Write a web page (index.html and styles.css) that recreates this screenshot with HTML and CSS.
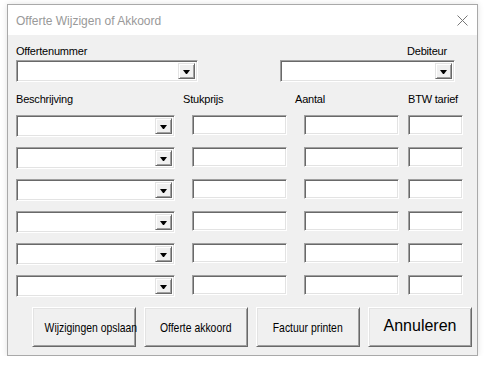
FILE: index.html
```html
<!DOCTYPE html>
<html lang="nl">
<head>
<meta charset="UTF-8" />
<title>Offerte Wijzigen of Akkoord</title>
<link rel="stylesheet" href="styles.css">
</head>
<body>

<div class="window">
  <div class="titlebar">
    <span class="title">Offerte Wijzigen of Akkoord</span>
    <svg class="close" width="11" height="11" viewBox="0 0 11 11">
      <path d="M0.5 0.5 L10.5 10.5 M10.5 0.5 L0.5 10.5" stroke="#777" stroke-width="1" fill="none"/>
    </svg>
  </div>

  <div class="form">
    <div class="topRow">
      <div class="field offerte">
        <label class="lbl">Offertenummer</label>
        <div class="combo"><span class="drop"><i></i></span></div>
      </div>
      <div class="field debiteur">
        <label class="lbl">Debiteur</label>
        <div class="combo"><span class="drop"><i></i></span></div>
      </div>
    </div>

    <div class="headRow">
      <span class="lbl">Beschrijving</span>
      <span class="lbl">Stukprijs</span>
      <span class="lbl">Aantal</span>
      <span class="lbl">BTW tarief</span>
    </div>

    <div class="lines">
      <div class="combo line"><span class="drop"><i></i></span></div>
      <div class="textbox prijs"></div>
      <div class="textbox aantal"></div>
      <div class="textbox btw"></div>

      <div class="combo line"><span class="drop"><i></i></span></div>
      <div class="textbox prijs"></div>
      <div class="textbox aantal"></div>
      <div class="textbox btw"></div>

      <div class="combo line"><span class="drop"><i></i></span></div>
      <div class="textbox prijs"></div>
      <div class="textbox aantal"></div>
      <div class="textbox btw"></div>

      <div class="combo line"><span class="drop"><i></i></span></div>
      <div class="textbox prijs"></div>
      <div class="textbox aantal"></div>
      <div class="textbox btw"></div>

      <div class="combo line"><span class="drop"><i></i></span></div>
      <div class="textbox prijs"></div>
      <div class="textbox aantal"></div>
      <div class="textbox btw"></div>

      <div class="combo line"><span class="drop"><i></i></span></div>
      <div class="textbox prijs"></div>
      <div class="textbox aantal"></div>
      <div class="textbox btw"></div>
    </div>

    <div class="buttons">
      <button class="btn small"><span>Wijzigingen opslaan</span></button>
      <button class="btn small"><span>Offerte akkoord</span></button>
      <button class="btn small"><span>Factuur printen</span></button>
      <button class="btn big">Annuleren</button>
    </div>
  </div>
</div>

</body>
</html>
```

FILE: styles.css
```css
body {
  margin: 0;
  background: #fff;
  font-family: "Liberation Sans", Arial, sans-serif;
  color: #000;
}

.window {
  box-sizing: border-box;
  width: 471px;
  height: 352px;
  margin: 4px 0 0 7px;
  border: 1px solid #a9a9a9;
  background: #f0f0f0;
  box-shadow: 0 0 6px rgba(0,0,0,0.12);
  display: flex;
  flex-direction: column;
}

.titlebar {
  height: 30px;
  background: #fff;
  display: flex;
  align-items: center;
  justify-content: space-between;
  padding: 0 9px 0 8px;
}
.title {
  font-size: 12px;
  color: #999;
  margin-top: 1px;
}
.close { margin-top: 1px; }

.form {
  padding: 10px 0 0 8px;
}

.lbl {
  display: block;
  font-size: 11px;
  line-height: 13px;
  letter-spacing: -0.2px;
  height: 13px;
}

.topRow {
  display: flex;
  gap: 82px;
}
.field .lbl { margin-bottom: 2px; }
.offerte .combo { width: 182px; }
.debiteur .combo { width: 175px; }
.debiteur .lbl { padding-left: 127px; }

/* sunken controls */
.combo, .textbox {
  box-sizing: border-box;
  background: #fff;
  border: 1px solid;
  border-color: #a0a0a0 #fff #fff #a0a0a0;
  box-shadow: inset 1px 1px 0 #696969, inset -1px -1px 0 #e3e3e3;
}
.combo {
  height: 22px;
  display: flex;
  justify-content: flex-end;
  padding: 2px;
}
.textbox { height: 20px; }

.drop {
  box-sizing: border-box;
  width: 17px;
  height: 100%;
  background: #f0f0f0;
  border: 1px solid;
  border-color: #e3e3e3 #696969 #696969 #e3e3e3;
  box-shadow: inset 1px 1px 0 #fff, inset -1px -1px 0 #a0a0a0;
  display: flex;
  align-items: center;
  justify-content: center;
}
.drop i {
  width: 1px;
  height: 0;
  border-top: 4px solid #000;
  border-left: 3px solid transparent;
  border-right: 3px solid transparent;
  margin-top: 1px;
}

.headRow {
  display: grid;
  grid-template-columns: 167px 112px 113px auto;
  margin-top: 11px;
}

.lines {
  display: grid;
  grid-template-columns: 176px 112px 104px 55px;
  row-gap: 10px;
  align-items: start;
  margin-top: 9px;
}
.line { width: 159px; }
.prijs, .aantal { width: 95px; }
.btw { width: 55px; }

.buttons {
  display: flex;
  gap: 8px;
  padding-left: 16px;
  margin-top: 10px;
}
.btn {
  box-sizing: border-box;
  width: 104px;
  height: 40px;
  padding: 0;
  background: #f0f0f0;
  font-family: "Liberation Sans", Arial, sans-serif;
  color: #000;
  border: 1px solid;
  border-color: #fff #696969 #696969 #fff;
  box-shadow: inset 1px 1px 0 #e3e3e3, inset -1px -1px 0 #a0a0a0;
}
.btn.small {
  font-size: 13px;
  padding-top: 1px;
  white-space: nowrap;
}
.btn.small span {
  display: inline-block;
  transform: scaleX(0.8);
}
.btn.big {
  font-size: 16px;
  padding-bottom: 3px;
}
```
